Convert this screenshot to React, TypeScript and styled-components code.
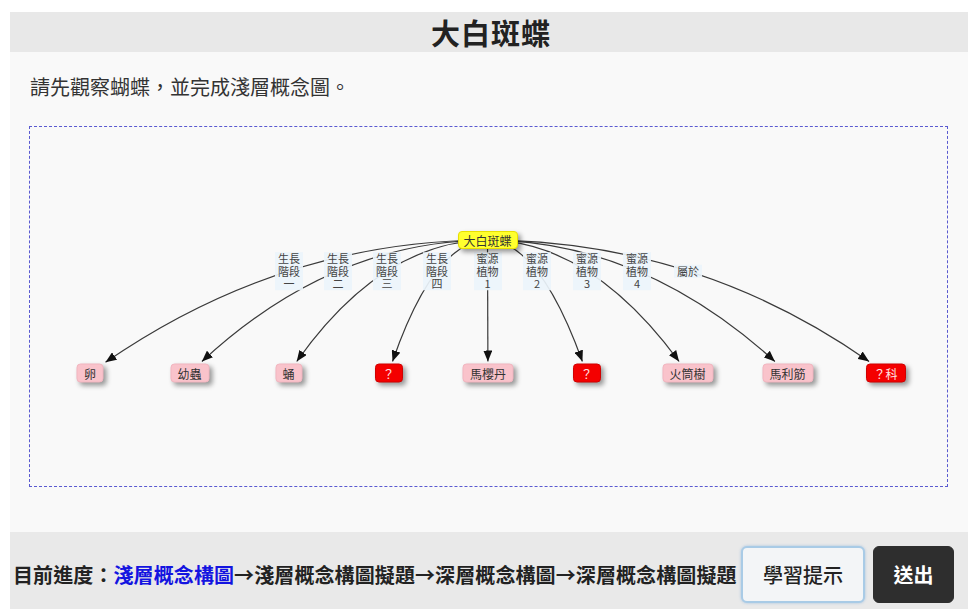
import React from 'react';
import styled, { createGlobalStyle } from 'styled-components';

const Global = createGlobalStyle`
  html, body { margin: 0; padding: 0; background: #ffffff; }
  body { font-family: "Noto Sans CJK TC", "Noto Sans", sans-serif; color: #222; }
  * { box-sizing: border-box; }
`;

const Page = styled.div`
  width: 968px;
  padding: 12px 0 0 10px;
`;

const Header = styled.header`
  height: 40px;
  background: #e8e8e8;
  display: flex;
  align-items: center;
  justify-content: center;
`;

const Title = styled.h1`
  margin: 0 0 0 4px;
  font-size: 29px;
  font-weight: 700;
  line-height: 40px;
  color: #222;
  letter-spacing: 1px;
`;

const Main = styled.main`
  height: 480px;
  background: #f9f9f9;
  padding: 24px 20px 0 19px;
`;

const Instruction = styled.p`
  margin: 0 0 28px 1px;
  font-size: 20px;
  line-height: 22px;
  color: #333;
`;

const MapBox = styled.div`
  position: relative;
  width: 919px;
  height: 361px;
  border: 1px dashed #5a5ad0;
`;

const EdgeLayer = styled.svg`
  position: absolute;
  left: 0;
  top: 0;
  overflow: visible;
`;

const Node = styled.div<{ $kind: 'root' | 'leaf' | 'missing' }>`
  position: absolute;
  transform: translate(-50%, -50%);
  height: ${p => (p.$kind === 'root' ? 18 : 19)}px;
  padding: 0 ${p => (p.$kind === 'root' ? 5 : p.$kind === 'missing' ? 7 : 6.5)}px;
  display: flex;
  align-items: center;
  white-space: nowrap;
  font-size: 12px;
  border-radius: 4px;
  background: ${p => (p.$kind === 'root' ? '#ffff2e' : p.$kind === 'missing' ? '#f40000' : '#f9c3cb')};
  color: ${p => (p.$kind === 'missing' ? '#ffe2e2' : '#333')};
  border: 1px solid ${p => (p.$kind === 'root' ? '#e8e000' : p.$kind === 'missing' ? '#d00000' : '#f2b6c0')};
  box-shadow: 3px 3px 5px rgba(0, 0, 0, 0.4);
  z-index: 2;
`;

const EdgeLabel = styled.div`
  position: absolute;
  transform: translate(-50%, -50%);
  font-size: 11px;
  line-height: 12.5px;
  text-align: center;
  white-space: pre-line;
  color: #444;
  background: rgba(236, 244, 251, 0.92);
  padding: 0 3px;
  z-index: 1;
`;

const Footer = styled.footer`
  height: 77px;
  background: #e9e9e9;
  display: flex;
  align-items: center;
  padding: 8px 14px 0 3px;
`;

const Progress = styled.div`
  flex: 1;
  min-width: 0;
  font-size: 20px;
  letter-spacing: 0.1px;
  font-weight: 700;
  color: #222;
  white-space: nowrap;
`;

const Current = styled.span`
  color: #1414e0;
`;

const Button = styled.button<{ $dark?: boolean }>`
  flex: none;
  width: ${p => (p.$dark ? 81 : 124)}px;
  height: 57px;
  margin-left: 8px;
  padding: 0;
  border-radius: 6px;
  font-family: inherit;
  font-size: 20px;
  font-weight: ${p => (p.$dark ? 700 : 500)};
  cursor: pointer;
  background: ${p => (p.$dark ? '#2e2e2e' : '#f3f5f7')};
  color: ${p => (p.$dark ? '#ffffff' : '#222')};
  border: ${p => (p.$dark ? '1px solid #2e2e2e' : '2px solid #a9cbe6')};
  box-shadow: ${p => (p.$dark ? 'none' : '0 0 3px rgba(120, 170, 220, 0.6)')};
`;

type Pt = { x: number; y: number };

const ROOT: Pt = { x: 457.5, y: 113 };
const LEAF_Y = 246;
const LABEL_Y = 144;

type Edge = {
  label: string;
  lx: number;
  leaf: string;
  px: number;
  w: number;
  missing?: boolean;
};

const edges: Edge[] = [
  { label: '生長\n階段\n一', lx: 259, leaf: '卵', px: 60, w: 26 },
  { label: '生長\n階段\n二', lx: 308, leaf: '幼蟲', px: 159.5, w: 36 },
  { label: '生長\n階段\n三', lx: 357, leaf: '蛹', px: 258.5, w: 26 },
  { label: '生長\n階段\n四', lx: 407, leaf: '？', px: 358.5, w: 27, missing: true },
  { label: '蜜源\n植物\n1', lx: 457.5, leaf: '馬櫻丹', px: 458, w: 48 },
  { label: '蜜源\n植物\n2', lx: 507, leaf: '？', px: 556.5, w: 27, missing: true },
  { label: '蜜源\n植物\n3', lx: 557, leaf: '火筒樹', px: 657.5, w: 48 },
  { label: '蜜源\n植物\n4', lx: 607, leaf: '馬利筋', px: 757.5, w: 48 },
  { label: '屬於', lx: 658, leaf: '？科', px: 855.5, w: 36, missing: true },
];

function geometry(e: Edge) {
  const L = { x: e.lx, y: LABEL_Y };
  const P = { x: e.px, y: LEAF_Y };
  let C = { x: 2 * L.x - (ROOT.x + P.x) / 2, y: 2 * L.y - (ROOT.y + P.y) / 2 };
  const dx = P.x - C.x;
  const dy = P.y - C.y;
  const hw = e.w / 2 + 2.5;
  const hh = 9.5 + 2;
  const s = Math.min(Math.abs(dx) > 0.01 ? hw / Math.abs(dx) : Infinity, hh / Math.abs(dy));
  const E = { x: P.x - dx * s, y: P.y - dy * s };
  C = { x: 2 * L.x - (ROOT.x + E.x) / 2, y: 2 * L.y - (ROOT.y + E.y) / 2 };
  return `M${ROOT.x},${ROOT.y} Q${C.x.toFixed(1)},${C.y.toFixed(1)} ${E.x.toFixed(1)},${E.y.toFixed(1)}`;
}

function ConceptMap() {
  return (
    <MapBox>
      <EdgeLayer width={917} height={359}>
        <defs>
          <marker id="arrow" markerUnits="userSpaceOnUse" markerWidth="11" markerHeight="9" refX="11" refY="4.5" orient="auto">
            <path d="M0,0 L11,4.5 L0,9 z" fill="#111" />
          </marker>
        </defs>
        {edges.map((e, i) => (
          <path key={i} d={geometry(e)} fill="none" stroke="#3a3a3a" strokeWidth={1.2} markerEnd="url(#arrow)" />
        ))}
      </EdgeLayer>
      {edges.map((e, i) => (
        <EdgeLabel key={`l${i}`} style={{ left: e.lx, top: LABEL_Y }}>
          {e.label}
        </EdgeLabel>
      ))}
      <Node $kind="root" style={{ left: ROOT.x, top: ROOT.y }}>大白斑蝶</Node>
      {edges.map((e, i) => (
        <Node key={`n${i}`} $kind={e.missing ? 'missing' : 'leaf'} style={{ left: e.px, top: LEAF_Y }}>
          {e.leaf}
        </Node>
      ))}
    </MapBox>
  );
}

export default function App() {
  return (
    <>
      <Global />
      <Page>
        <Header>
          <Title>大白斑蝶</Title>
        </Header>
        <Main>
          <Instruction>請先觀察蝴蝶，並完成淺層概念圖。</Instruction>
          <ConceptMap />
        </Main>
        <Footer>
          <Progress>
            目前進度：<Current>淺層概念構圖</Current>→淺層概念構圖擬題→深層概念構圖→深層概念構圖擬題
          </Progress>
          <Button>學習提示</Button>
          <Button $dark>送出</Button>
        </Footer>
      </Page>
    </>
  );
}
